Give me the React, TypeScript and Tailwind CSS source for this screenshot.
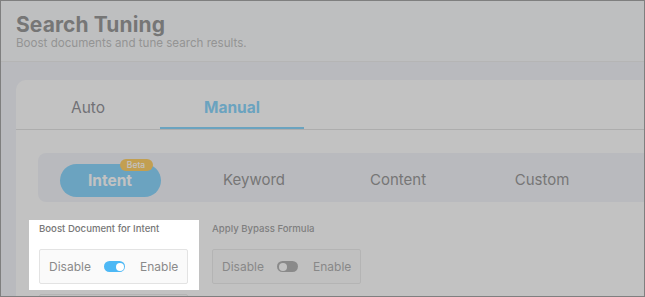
import React from "react";

const font = { fontFamily: "Inter, 'Noto Sans', sans-serif" };

function Toggle({ on }: { on: boolean }) {
  return (
    <div
      className={`relative w-[21px] h-[11px] rounded-full ${
        on ? "bg-[#4db8f5]" : "bg-[#8f8f8f]"
      }`}
    >
      <div
        className={`absolute top-[1.5px] w-[8px] h-[8px] rounded-full bg-white ${
          on ? "right-[1.5px]" : "left-[1.5px]"
        }`}
      />
    </div>
  );
}

function Field({ label, on }: { label: string; on: boolean }) {
  return (
    <div className="flex flex-col">
      <div className="h-[10px] leading-[10px] text-[9.6px] font-medium text-[#777] whitespace-nowrap">
        {label}
      </div>
      <div className="mt-[15px] h-[35px] w-[149px] border border-[#e3e3e3] bg-[#fafafa] rounded-[2px] flex items-center px-[9px] text-[12px] text-[#8a8a8a]">
        <span className="w-[40px] whitespace-nowrap">Disable</span>
        <div className="ml-[15px]">
          <Toggle on={on} />
        </div>
        <span className="ml-[15px] whitespace-nowrap">Enable</span>
      </div>
    </div>
  );
}

export default function App() {
  const subTabs = ["Intent", "Keyword", "Content", "Custom"];
  return (
    <div
      style={font}
      className="relative w-[645px] h-[297px] border border-[#7f7f7f] overflow-hidden flex flex-col bg-[#edeff7]"
    >
      {/* Header */}
      <div className="h-[61px] shrink-0 bg-[#f7f9fb] border-b border-[#e5e5e5] pl-[15px] pt-[11px]">
        <div className="text-[21px] leading-[26px] font-bold text-[#666] tracking-[0.1px]">
          Search Tuning
        </div>
        <div className="text-[11.6px] leading-[12px] text-[#a2a2a2] -mt-[1px]">
          Boost documents and tune search results.
        </div>
      </div>

      {/* Body */}
      <div className="flex-1 pt-[18px] pl-[15px]">
        <div className="bg-white rounded-tl-[10px] h-full flex flex-col">
          {/* Tabs */}
          <div className="h-[50px] shrink-0 border-b border-[#d4d4d4] flex">
            <div className="w-[144px] h-[49px] flex items-center justify-center pt-[6px] text-[15.5px] text-[#5c5c66]">
              Auto
            </div>
            <div className="w-[144px] h-[49px] flex items-center justify-center pt-[8px] text-[15.5px] font-bold text-[#4fc0f8] border-b-2 border-[#4fc0f8]">
              Manual
            </div>
          </div>

          {/* Sub tabs */}
          <div className="mt-[23px] ml-[22px] h-[49px] shrink-0 bg-[#edeff7] rounded-l-[8px] pt-[11px] pb-[5px] flex">
            {subTabs.map((t, i) => (
              <div key={t} className="w-[144px] h-[33px] flex items-center justify-center">
                {i === 0 ? (
                  <div className="relative w-[101px] h-[33px] rounded-full bg-[#50c0fa] flex items-center justify-center text-[15.5px] font-bold text-white">
                    Intent
                    <div className="absolute left-[60px] -top-[5px] w-[33px] h-[12px] rounded-full bg-[#ffb81c] flex items-center justify-center text-[8.5px] font-medium text-white leading-none">
                      Beta
                    </div>
                  </div>
                ) : (
                  <span className="text-[15px] text-[#666]">{t}</span>
                )}
              </div>
            ))}
          </div>

          {/* Fields */}
          <div className="mt-[22px] ml-[23px] flex gap-[24px]">
            <Field label="Boost Document for Intent" on={true} />
            <Field label="Apply Bypass Formula" on={false} />
          </div>
          <div className="mt-[10px] ml-[23px] h-[35px] w-[149px] border border-[#e3e3e3] bg-[#fafafa] rounded-[2px]" />
        </div>
      </div>

      {/* Spotlight overlay */}
      <div className="absolute left-[28px] top-[219px] w-[170px] h-[70px] bg-transparent shadow-[0_0_0_9999px_rgba(134,134,134,0.5)] pointer-events-none" />
    </div>
  );
}
